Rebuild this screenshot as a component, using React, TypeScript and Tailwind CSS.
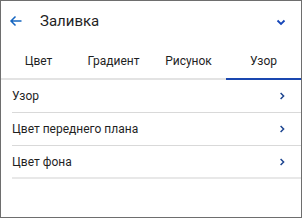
import React from "react";

const Chevron = () => (
  <svg width="10" height="10" viewBox="0 0 10 10" className="shrink-0">
    <path d="M3.6 2 L6.6 5 L3.6 8" fill="none" stroke="#1d4590" strokeWidth="1.5" />
  </svg>
);

export default function App() {
  const tabs = ["Цвет", "Градиент", "Рисунок", "Узор"];
  const rows = ["Узор", "Цвет переднего плана", "Цвет фона"];
  return (
    <div
      className="w-[302px] h-[218px] border border-[#6e6e6e] bg-white flex flex-col text-[#1f1f1f]"
      style={{ fontFamily: "Roboto, 'Liberation Sans', sans-serif" }}
    >
      <div className="flex items-center h-[40px] pl-[8px] pr-[14px]">
        <svg width="14" height="14" viewBox="0 0 14 14" className="shrink-0">
          <path d="M12.5 7 H2 M6.5 2.5 L2 7 L6.5 11.5" fill="none" stroke="#1565c0" strokeWidth="1.5" />
        </svg>
        <span className="ml-[17px] text-[15px] flex-1">Заливка</span>
        <svg width="12" height="10" viewBox="0 0 12 10" className="shrink-0 mt-[2px]">
          <path d="M2.5 3.5 L6 7 L9.5 3.5" fill="none" stroke="#1546b8" strokeWidth="1.8" />
        </svg>
      </div>
      <div className="flex h-[39px] border-b-2 border-[#e3e3e3]">
        {tabs.map((t, i) => (
          <div
            key={t}
            className={
              "flex-1 flex items-center justify-center pt-[2px] text-[12px] -mb-[2px] border-b-2 " +
              (i === 3 ? "border-[#1a47b0]" : "border-transparent")
            }
          >
            {t}
          </div>
        ))}
      </div>
      <div className="flex flex-col pl-[11px]">
        {rows.map((r, i) => (
          <div
            key={r}
            className={
              "flex items-center h-[33px] pr-[14px] text-[12px] " +
              (i === 2 ? "border-b-2 border-[#e8e8e8]" : "border-b border-[#d9d9d9]")
            }
          >
            <span className="flex-1">{r}</span>
            <Chevron />
          </div>
        ))}
      </div>
    </div>
  );
}
